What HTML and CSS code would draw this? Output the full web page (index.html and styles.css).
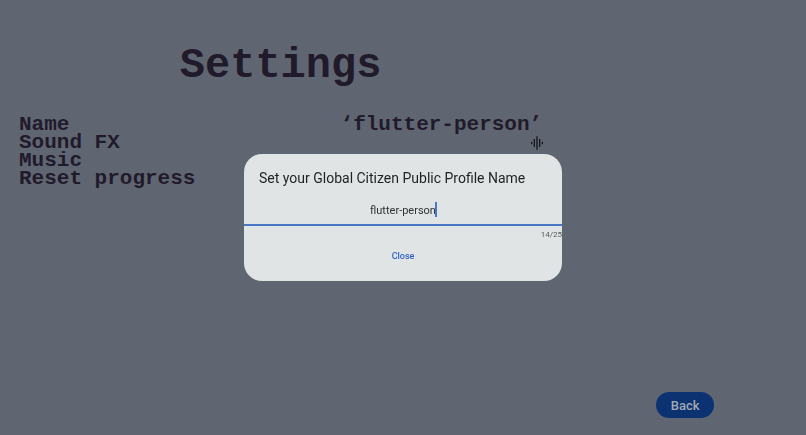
FILE: index.html
```html
<!DOCTYPE html>
<html lang="en">

<head>
    <meta charset="UTF-8">
    <meta name="viewport" content="width=device-width, initial-scale=1.0">
    <title>Settings</title>
    <link rel="stylesheet" href="styles.css">
</head>

<body>
    <div class="screen">
        <!-- Settings list -->
        <main class="settings">
            <h1 class="settings-title">Settings</h1>
            <ul class="settings-list">
                <li class="settings-row">
                    <span>Name</span>
                    <span>‘flutter-person’</span>
                </li>
                <li class="settings-row">
                    <span>Sound FX</span>
                    <svg class="settings-icon" viewBox="0 0 24 24" aria-hidden="true">
                        <path d="M7 18h2V6H7v12zm4 4h2V2h-2v20zm-8-8h2v-4H3v4zm12 4h2V6h-2v12zm4-8v4h2v-4h-2z" />
                    </svg>
                </li>
                <li class="settings-row">
                    <span>Music</span>
                </li>
                <li class="settings-row">
                    <span>Reset progress</span>
                </li>
            </ul>
        </main>

        <!-- Actions -->
        <aside class="actions">
            <button class="btn-back" type="button">Back</button>
        </aside>
    </div>

    <!-- Profile name dialog -->
    <div class="overlay">
        <form class="dialog" role="dialog" aria-modal="true">
            <label class="dialog-title" for="profile-name">Set your Global Citizen Public Profile Name</label>
            <div class="field">
                <input class="field-input" type="text" id="profile-name" value="flutter-person" maxlength="25">
                <span class="field-caret"></span>
            </div>
            <div class="field-counter">14/25</div>
            <button class="btn-close" type="button">Close</button>
        </form>
    </div>
</body>

</html>
```

FILE: styles.css
```css
/* Base Styles */
* {
    box-sizing: border-box;
}

body {
    margin: 0;
    background-color: #5f6672;
    color: #211a2b;
    font-family: Roboto, "Liberation Sans", sans-serif;
}

.screen {
    display: flex;
    min-height: 100vh;
}

/* Settings */
.settings {
    width: 70%;
    padding: 42px 22px 0 19px;
    font-family: "Liberation Mono", monospace;
    font-weight: bold;
}

.settings-title {
    margin: 0 0 26px;
    font-size: 42px;
    line-height: 48px;
    text-align: center;
}

.settings-list {
    margin: 0;
    padding: 0;
    list-style: none;
    font-size: 21px;
    line-height: 18px;
}

.settings-row {
    display: flex;
    justify-content: space-between;
    align-items: center;
}

.settings-icon {
    width: 16px;
    height: 16px;
    margin-right: -3px;
    fill: #16161c;
}

/* Actions */
.actions {
    width: 30%;
    display: flex;
    justify-content: center;
    align-items: flex-end;
    padding-bottom: 17px;
}

.btn-back {
    height: 26px;
    padding: 0 15px;
    border: none;
    border-radius: 13px;
    background-color: #0c3272;
    color: #a3a9b4;
    font-family: inherit;
    font-size: 13px;
    font-weight: 500;
    cursor: pointer;
}

/* Dialog */
.overlay {
    position: fixed;
    inset: 0;
    display: flex;
    justify-content: center;
    align-items: center;
}

.dialog {
    display: flex;
    flex-direction: column;
    width: 318px;
    padding: 14px 0 16px;
    border-radius: 18px;
    background-color: #e0e4e5;
    color: #1f2124;
}

.dialog-title {
    padding: 0 15px;
    font-size: 14px;
    line-height: 20px;
}

.field {
    position: relative;
    margin-top: 8px;
    border-bottom: 2px solid #4a78c8;
}

.field-input {
    display: block;
    width: 100%;
    height: 28px;
    padding: 0;
    border: none;
    outline: none;
    background: none;
    color: #2f3235;
    font-family: inherit;
    font-size: 11px;
    text-align: center;
}

.field-caret {
    position: absolute;
    top: 6px;
    left: calc(50% + 32px);
    width: 2px;
    height: 15px;
    background-color: #4a78c8;
}

.field-counter {
    margin-top: 3px;
    color: #55585c;
    font-size: 8px;
    line-height: 12px;
    text-align: right;
}

.btn-close {
    align-self: center;
    margin-top: 6px;
    padding: 0 8px;
    border: none;
    background: none;
    color: #2f62c4;
    font-family: inherit;
    font-size: 9px;
    font-weight: 500;
    line-height: 18px;
    cursor: pointer;
}
```
